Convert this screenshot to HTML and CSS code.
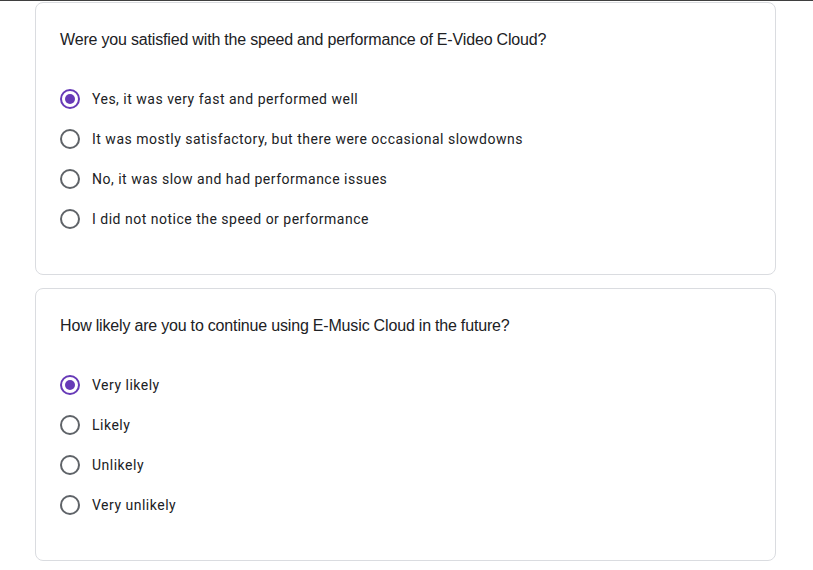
FILE: index.html
```html
<!DOCTYPE html>
<html>
<head>
<meta charset="utf-8">
<link rel="stylesheet" href="styles.css">
</head>
<body>
<div class="topline"></div>
<main class="page">
  <section class="card">
    <div class="question">Were you satisfied with the speed and performance of E-Video Cloud?</div>
    <div class="options">
      <label class="option"><span class="radio checked"></span><span class="label">Yes, it was very fast and performed well</span></label>
      <label class="option"><span class="radio"></span><span class="label">It was mostly satisfactory, but there were occasional slowdowns</span></label>
      <label class="option"><span class="radio"></span><span class="label">No, it was slow and had performance issues</span></label>
      <label class="option"><span class="radio"></span><span class="label">I did not notice the speed or performance</span></label>
    </div>
  </section>
  <section class="card">
    <div class="question">How likely are you to continue using E-Music Cloud in the future?</div>
    <div class="options">
      <label class="option"><span class="radio checked"></span><span class="label">Very likely</span></label>
      <label class="option"><span class="radio"></span><span class="label">Likely</span></label>
      <label class="option"><span class="radio"></span><span class="label">Unlikely</span></label>
      <label class="option"><span class="radio"></span><span class="label">Very unlikely</span></label>
    </div>
  </section>
</main>
</body>
</html>
```
FILE: styles.css
```css
html, body {
  margin: 0;
  padding: 0;
  background: #ffffff;
}
.topline {
  height: 1px;
  background: #3f3f3f;
}
.page {
  display: flex;
  flex-direction: column;
  gap: 13px;
  padding: 1px 0 0 35px;
  width: 741px;
}
.card {
  border: 1px solid #dadce0;
  border-radius: 8px;
  padding: 25px 24px 35px 24px;
  background: #fff;
}
.question {
  font-family: "Liberation Sans", Arial, sans-serif;
  font-size: 16px;
  line-height: 24px;
  color: #202124;
  letter-spacing: -0.15px;
  word-spacing: -0.2px;
}
.options {
  margin-top: 27px;
  display: flex;
  flex-direction: column;
}
.option {
  display: flex;
  align-items: center;
  height: 40px;
  gap: 12px;
}
.radio {
  box-sizing: border-box;
  width: 20px;
  height: 20px;
  border: 2px solid #5f6368;
  border-radius: 50%;
  display: flex;
  align-items: center;
  justify-content: center;
  flex: none;
}
.radio.checked {
  border-color: #673ab7;
}
.radio.checked::after {
  content: "";
  width: 10px;
  height: 10px;
  border-radius: 50%;
  background: #673ab7;
}
.label {
  font-family: Roboto, "Noto Sans", sans-serif;
  font-size: 14px;
  color: #202124;
  letter-spacing: 0.5px;
}
```
